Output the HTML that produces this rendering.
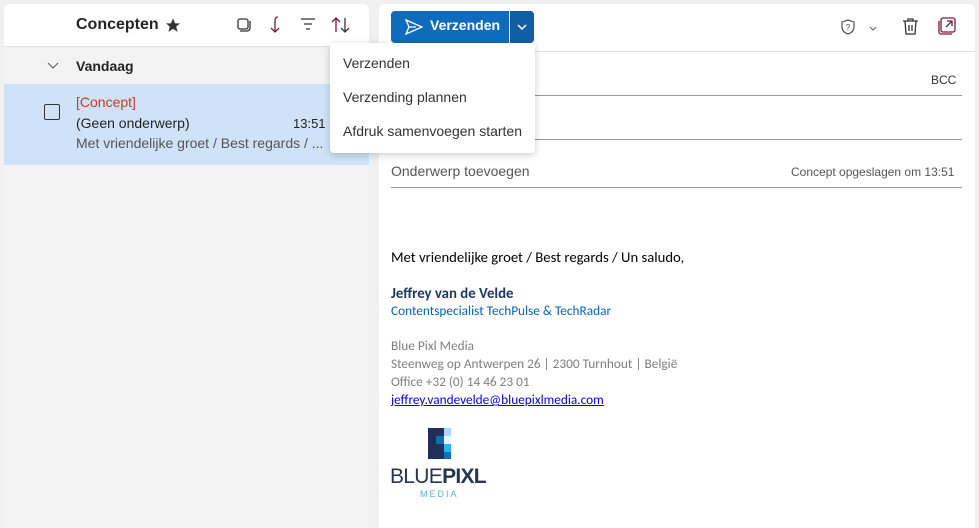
<!DOCTYPE html>
<html><head><meta charset="utf-8"><style>
*{margin:0;padding:0;box-sizing:border-box}
body{width:979px;height:528px;background:#f0f0f0;font-family:"Segoe UI","Liberation Sans",sans-serif;position:relative;overflow:hidden;color:#242424}
.a{position:absolute}
</style></head><body>
<div class="a" style="left:4px;top:4px;width:365px;height:524px;background:#f3f3f3;border-radius:6px 6px 0 0;overflow:hidden">
 <div class="a" style="left:0;top:0;width:365px;height:43px;background:#fff;border-bottom:1px solid #e0e0e0"></div>
 <div class="a" style="left:72px;top:12px;font-size:16px;font-weight:600">Concepten</div>
 <svg class="a" style="left:160px;top:13px" width="18" height="17" viewBox="0 0 24 24"><path d="M12 2l3 7h7l-5.5 4.5 2 7.5L12 16.5 5.5 21l2-7.5L2 9h7z" fill="#333"/></svg>
 <svg class="a" style="left:232px;top:13px" width="16" height="16" viewBox="0 0 16 16" fill="none" stroke="#333" stroke-width="1.3"><rect x="2" y="2" width="10" height="10" rx="2"/><path d="M4 14h7a3 3 0 0 0 3-3V4"/></svg>
 <svg class="a" style="left:265px;top:12px" width="14" height="18" viewBox="0 0 14 18" fill="none" stroke="#7a1a3a" stroke-width="1.3"><path d="M9 1Q6 1 6 5v11M2 12l4 4 4-4"/></svg>
 <svg class="a" style="left:296px;top:14px" width="16" height="12" viewBox="0 0 16 12" stroke="#333" stroke-width="1.3"><path d="M1 1h14M4 6h8M6 11h4"/></svg>
 <svg class="a" style="left:327px;top:13px" width="20" height="16" viewBox="0 0 20 16" fill="none" stroke-width="1.3"><path d="M5 15V1M1 5l4-4 4 4" stroke="#7a1a3a"/><path d="M14 1v14M10 11l4 4 4-4" stroke="#333"/></svg>
 <svg class="a" style="left:43px;top:58px" width="12" height="8" viewBox="0 0 12 8" fill="none" stroke="#555"><path d="M1 1l5 5 5-5"/></svg>
 <div class="a" style="left:72px;top:54px;font-size:14px;font-weight:600">Vandaag</div>
 <div class="a" style="left:0;top:80px;width:365px;height:81px;background:#cfe2f8"></div>
 <div class="a" style="left:40px;top:100px;width:16px;height:16px;border:1.3px solid #333;border-radius:2px"></div>
 <div class="a" style="left:72px;top:90px;font-size:14px;color:#c4401e">[Concept]</div>
 <div class="a" style="left:72px;top:111px;font-size:14px">(Geen onderwerp)</div>
 <div class="a" style="left:289px;top:112px;font-size:13px">13:51</div>
 <div class="a" style="left:72px;top:131px;font-size:14px;color:#555">Met vriendelijke groet / Best regards / ...</div>
</div>
<div class="a" style="left:379px;top:4px;width:596px;height:524px;background:#fff;border-radius:6px 6px 0 0">
 <div class="a" style="left:0;top:47px;width:596px;height:1px;background:#e0e0e0"></div>
 <div class="a" style="left:12px;top:7px;width:143px;height:32px;background:#0f6cbd;border-radius:4px"></div>
 <div class="a" style="left:130px;top:7px;width:25px;height:32px;background:#115ea3;border-radius:0 4px 4px 0;border-left:1px solid #fff"></div>
 <svg class="a" style="left:26px;top:15px" width="18" height="16" viewBox="0 0 18 16" fill="none" stroke="#fff" stroke-width="1.3"><path d="M1 1l16 7-16 7 3-7zM4 8h7"/></svg>
 <div class="a" style="left:51px;top:13px;font-size:14px;font-weight:600;color:#fff">Verzenden</div>
 <svg class="a" style="left:138px;top:20px" width="10" height="7" viewBox="0 0 10 7" fill="none" stroke="#fff" stroke-width="1.5"><path d="M1 1l4 4 4-4"/></svg>
 <svg class="a" style="left:462px;top:15px" width="14" height="16" viewBox="0 0 14 16" fill="none" stroke="#444" stroke-width="1.1"><path d="M7 1l6 2v5c0 4-3 6-6 7-3-1-6-3-6-7V3z"/><text x="7" y="11" font-size="8" fill="#444" stroke="none" text-anchor="middle" font-family="Liberation Sans">?</text></svg>
 <svg class="a" style="left:490px;top:22px" width="8" height="5" viewBox="0 0 8 5" fill="none" stroke="#666"><path d="M1 1l3 3 3-3"/></svg>
 <svg class="a" style="left:523px;top:13px" width="17" height="19" viewBox="0 0 17 19" fill="none" stroke="#333" stroke-width="1.3"><path d="M1 4h15M6 4V2h5v2M3 4l1 13h9l1-13M7 8v6M10 8v6"/></svg>
 <svg class="a" style="left:559px;top:13px" width="18" height="18" viewBox="0 0 18 18" fill="none" stroke="#7a1a3a" stroke-width="1.3"><rect x="3" y="1" width="14" height="14" rx="2"/><path d="M1 4v11a2 2 0 0 0 2 2h11M8 10l6-6M9 4h5v5"/></svg>
 <div class="a" style="left:552px;top:69px;font-size:12px;color:#333">BCC</div>
 <div class="a" style="left:12px;top:91px;width:571px;height:1px;background:#999"></div>
 <div class="a" style="left:12px;top:135px;width:571px;height:1px;background:#999"></div>
 <div class="a" style="left:12px;top:159px;font-size:14px;color:#555">Onderwerp toevoegen</div>
 <div class="a" style="left:412px;top:161px;font-size:12px;color:#555">Concept opgeslagen om 13:51</div>
 <div class="a" style="left:12px;top:183px;width:571px;height:1px;background:#999"></div>
 <div style="position:absolute;left:12px;top:244px;font-family:Calibri,Carlito,'Liberation Sans',sans-serif">
  <div style="font-size:14.7px;color:#000">Met vriendelijke groet / Best regards / Un saludo,</div>
  <div style="margin-top:18px;font-size:14.8px;font-weight:bold;color:#1f3864">Jeffrey van de Velde</div>
  <div style="margin-top:0px;font-size:13.3px;color:#0563c1">Contentspecialist TechPulse &amp; TechRadar</div>
  <div style="margin-top:18px;font-size:13.3px;color:#7f7f7f;line-height:18px">Blue Pixl Media<br>Steenweg op Antwerpen 26 | 2300 Turnhout | België<br>Office +32 (0) 14 46 23 01<br><span style="color:#0000ee;text-decoration:underline">jeffrey.vandevelde@bluepixlmedia.com</span></div>
 </div>
 <div class="a" style="left:49px;top:424px;width:8px;height:31px;background:#1f3158"></div>
 <div class="a" style="left:57px;top:424px;width:8px;height:8px;background:#1f3158"></div>
 <div class="a" style="left:57px;top:432px;width:8px;height:8px;background:#0a6fb5"></div>
 <div class="a" style="left:57px;top:440px;width:8px;height:15px;background:#1f3158"></div>
 <div class="a" style="left:65px;top:424px;width:7px;height:8px;background:#a8d8f3"></div>
 <div class="a" style="left:65px;top:432px;width:7px;height:8px;background:#e6f4fc"></div>
 <div class="a" style="left:65px;top:440px;width:7px;height:8px;background:#29b5ea"></div>
 <div class="a" style="left:65px;top:448px;width:7px;height:7px;background:#0a6fb5"></div>
 <div class="a" style="left:11px;top:461px;font-size:21px;color:#263550;letter-spacing:-0.7px;font-family:'Liberation Sans',sans-serif">BLUE<b>PIXL</b></div>
 <div class="a" style="left:41px;top:485px;font-size:9px;color:#5aaee0;letter-spacing:2px;font-family:'Liberation Sans',sans-serif">MEDIA</div>
</div>
<div class="a" style="left:330px;top:43px;width:205px;height:110px;background:#fff;border-radius:4px;box-shadow:0 2px 8px rgba(0,0,0,.2)">
 <div class="a" style="left:13px;top:12px;font-size:14px;color:#333">Verzenden</div>
 <div class="a" style="left:13px;top:46px;font-size:14px;color:#333">Verzending plannen</div>
 <div class="a" style="left:13px;top:80px;font-size:14px;color:#333">Afdruk samenvoegen starten</div>
</div>
</body></html>
